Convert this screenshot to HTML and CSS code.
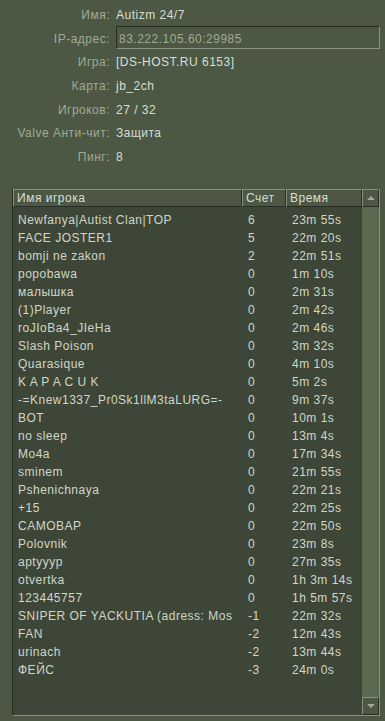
FILE: index.html
```html
<!DOCTYPE html>
<html lang="ru">
<head>
    <meta charset="UTF-8">
    <title>Информация о сервере</title>
    <link rel="stylesheet" href="styles.css">
</head>
<body>
    <main>
        <div class="info">
            <span class="label">Имя:</span><span class="value">Autizm 24/7</span>
            <span class="label">IP-адрес:</span><span class="value"><span class="ipbox">83.222.105.60:29985</span></span>
            <span class="label">Игра:</span><span class="value">[DS-HOST.RU 6153]</span>
            <span class="label">Карта:</span><span class="value">jb_2ch</span>
            <span class="label">Игроков:</span><span class="value">27 / 32</span>
            <span class="label">Valve Анти-чит:</span><span class="value">Защита</span>
            <span class="label">Пинг:</span><span class="value">8</span>
        </div>

        <div class="players">
            <div class="list">
                <div class="head">
                    <div class="hcell">Имя игрока</div>
                    <div class="hcell">Счет</div>
                    <div class="hcell">Время</div>
                </div>
                <div class="rows" id="rows"></div>
            </div>
            <div class="scroll">
                <div class="sbtn"><span class="up"></span></div>
                <div class="track"></div>
                <div class="sbtn"><span class="down"></span></div>
            </div>
        </div>
    </main>
    <script>
        var players = [
            ["Newfanya|Autist Clan|TOP", "6", "23m 55s"],
            ["FACE JOSTER1", "5", "22m 20s"],
            ["bomji ne zakon", "2", "22m 51s"],
            ["popobawa", "0", "1m 10s"],
            ["малышка", "0", "2m 31s"],
            ["(1)Player", "0", "2m 42s"],
            ["roJIoBa4_JIeHa", "0", "2m 46s"],
            ["Slash Poison", "0", "3m 32s"],
            ["Quarasique", "0", "4m 10s"],
            ["K A P A C U K", "0", "5m 2s"],
            ["-=Knew1337_Pr0Sk1llM3taLURG=-", "0", "9m 37s"],
            ["BOT", "0", "10m 1s"],
            ["no sleep", "0", "13m 4s"],
            ["Mo4a", "0", "17m 34s"],
            ["sminem", "0", "21m 55s"],
            ["Pshenichnaya", "0", "22m 21s"],
            ["+15", "0", "22m 25s"],
            ["CAMOBAP", "0", "22m 50s"],
            ["Polovnik", "0", "23m 8s"],
            ["aptyyyp", "0", "27m 35s"],
            ["otvertka", "0", "1h 3m 14s"],
            ["123445757", "0", "1h 5m 57s"],
            ["SNIPER OF YACKUTIA (adress: Mos", "-1", "22m 32s"],
            ["FAN", "-2", "12m 43s"],
            ["urinach", "-2", "13m 44s"],
            ["ФЕЙС", "-3", "24m 0s"]
        ];

        var rows = document.getElementById("rows");
        players.forEach(function(p){
            var row = document.createElement("div");
            row.className = "row";
            p.forEach(function(t){
                var c = document.createElement("span");
                c.textContent = t;
                row.appendChild(c);
            });
            rows.appendChild(row);
        });
    </script>
</body>
</html>
```

FILE: styles.css
```css
html {margin: 0; padding: 0; background: #4c5844;}
body {margin: 0; font-family: "Liberation Sans", Arial, sans-serif; font-size: 12px; letter-spacing: 0.5px; color: #d8ded3;}
main {padding: 3px 5px 5px 12px; height: 713px; display: flex; flex-direction: column;}

.info {display: grid; grid-template-columns: 98px 1fr; grid-auto-rows: 23.7px; column-gap: 6px; align-items: center;}
.label {text-align: right; color: #a0aa95; white-space: nowrap;}
.value {color: #d8ded3; white-space: nowrap;}
.ipbox {
    display: block; height: 21px; line-height: 25px; padding-left: 2px; margin-top: -3px;
    color: #a0aa95;
    border: 1px solid; border-color: #282e22 #889180 #889180 #282e22;
}

.players {
    margin-top: 20px; flex: 1; display: flex;
    background: #3e4637;
    border: 1px solid; border-color: #282e22 #889180 #889180 #282e22;
    border-top: none;
}
.list {flex: 1; display: flex; flex-direction: column;}
.head {display: grid; grid-template-columns: 229px 44px 1fr; height: 18px;}
.hcell {
    background: #4c5844; color: #d8ded3; line-height: 16px; padding-left: 3px;
    border: 1px solid; border-color: #889180 #282e22 #282e22 #889180;
    box-sizing: border-box; height: 18px;
}
.rows {padding-top: 4px;}
.row {display: grid; grid-template-columns: 230px 44px 1fr; height: 18px; line-height: 18px; padding-left: 5px; color: #d0d6ca; white-space: nowrap;}
.row span {overflow: hidden;}

.scroll {width: 17px; display: flex; flex-direction: column;}
.track {flex: 1; background: #5a6a50;}
.sbtn {
    height: 18px; box-sizing: border-box; background: #4c5844;
    border: 1px solid; border-color: #889180 #282e22 #282e22 #889180;
    display: flex; align-items: center; justify-content: center;
}
.up {width: 0; height: 0; border-left: 4px solid transparent; border-right: 4px solid transparent; border-bottom: 4px solid #a0aa95;}
.down {width: 0; height: 0; border-left: 4px solid transparent; border-right: 4px solid transparent; border-top: 4px solid #a0aa95;}
```
